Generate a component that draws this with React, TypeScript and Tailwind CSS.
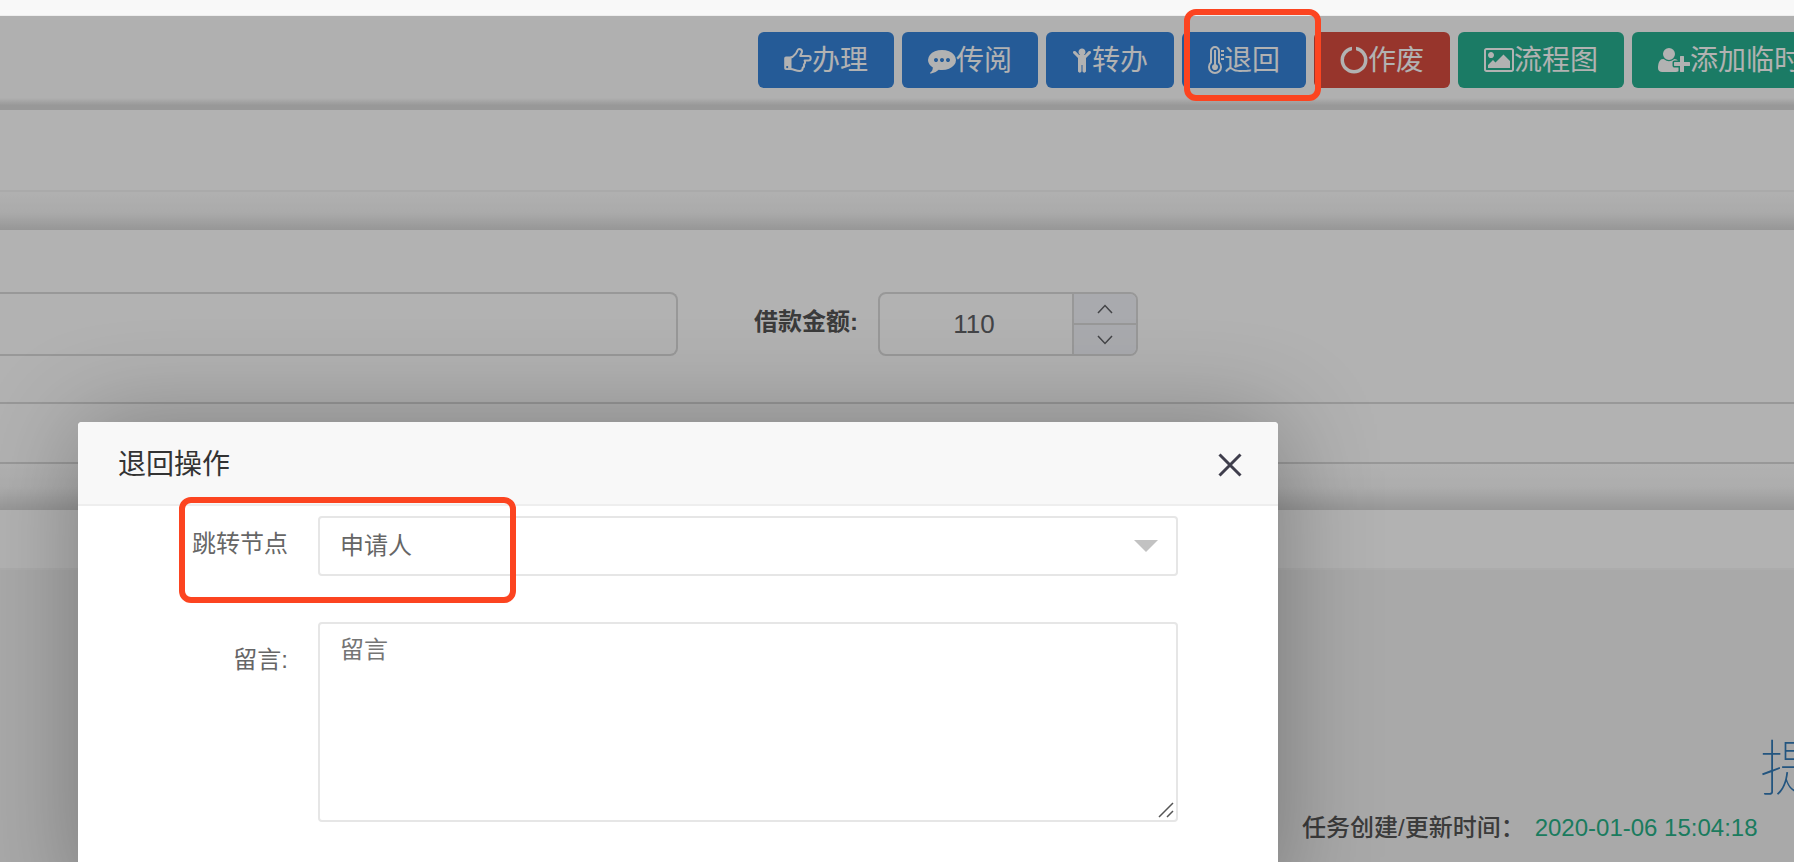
import type { ReactNode } from "react";

type IconProps = { viewBox: string; className: string; children: ReactNode };

function Icon({ viewBox, className, children }: IconProps) {
  return (
    <svg viewBox={viewBox} className={className} fill="currentColor" aria-hidden="true">
      {children}
    </svg>
  );
}

const HandIcon = () => (
  <Icon viewBox="0 0 28 28" className="h-7 w-7 shrink-0">
    <path
      fillRule="evenodd"
      d="M2 10.5h5.5v13.500h-5.500a1.800 1.800 0 0 1-1.800-1.800v-9.900a1.800 1.800 0 0 1 1.800-1.800zM3.200 20a1.100 1.100 0 1 0 0 2.200 1.100 1.100 0 0 0 0-2.200z"
    />
    <path
      fill="none"
      stroke="currentColor"
      strokeWidth="2"
      strokeLinejoin="round"
      d="M6.500 11.500C9.500 11.300 10.500 9 12 7.300C13.600 5.500 13.200 3 15 3C17 3 18 4 18 5.600C18 7.600 16.200 8.800 16.200 10H24.500A2.200 2.200 0 0 1 24.500 14.400H20.600C21.600 16 21 17.800 19.900 18.300C20.400 20 19.800 21.400 18.600 22C18.800 24 17.600 25 15.600 25C11.600 25 10 23 6.500 23"
    />
  </Icon>
);

const CommentIcon = () => (
  <Icon viewBox="0 0 1792 1792" className="h-7 w-7 shrink-0">
    <path d="M640 896q0-53-37.5-90.5t-90.5-37.5-90.5 37.5-37.5 90.5 37.5 90.5 90.5 37.5 90.5-37.5 37.5-90.5zm384 0q0-53-37.5-90.5t-90.5-37.5-90.5 37.5-37.5 90.5 37.5 90.5 90.5 37.5 90.5-37.5 37.5-90.5zm384 0q0-53-37.5-90.5t-90.5-37.5-90.5 37.5-37.5 90.5 37.5 90.5 90.5 37.5 90.5-37.5 37.5-90.5zm384 0q0 174-120 321.5t-326 233-450 85.5q-110 0-211-18-173 173-435 229-52 10-86 13-12 1-22-6t-13-18q-4-15 20-37 5-5 23.5-21.5t25.5-23.5 23.5-25.5 24-31.5 20.5-37 20-48 14.500-57.500 12.500-72.500q-146-90-229.500-216.500t-83.500-269.500q0-174 120-321.500t326-233 450-85.500 450 85.500 326 233 120 321.500z" />
  </Icon>
);

const ChildIcon = () => (
  <Icon viewBox="0 0 1280 1792" className="h-7 w-5 shrink-0">
    <path d="M1188 476l-292 292v824q0 46-33 79t-79 33-79-33-33-79v-384h-64v384q0 46-33 79t-79 33-79-33-33-79v-824l-292-292q-28-28-28-68t28-68q29-28 68.5-28t67.5 28l228 228h368l228-228q28-28 68-28t68 28q28 29 28 68.5t-28 67.5zm-324-92q0 93-65.5 158.5t-158.5 65.5-158.5-65.5-65.5-158.500 65.500-158.500 158.500-65.500 158.500 65.500 65.500 158.500z" />
  </Icon>
);

const ThermometerIcon = () => (
  <Icon viewBox="0 0 1024 1792" className="h-7 w-4 shrink-0">
    <path d="M640 1344q0 80-56 136t-136 56-136-56-56-136q0-60 35-110t93-71v-907h128v907q58 21 93 71t35 110zm128 0q0-77-34-144t-94-112v-768q0-80-56-136t-136-56-136 56-56 136v768q-60 45-94 112t-34 144q0 133 93.5 226.5t226.5 93.5 226.5-93.5 93.5-226.5zm128 0q0 185-131.5 316.5t-316.5 131.5-316.5-131.5-131.5-316.5q0-182 128-313v-711q0-133 93.5-226.5t226.5-93.5 226.500 93.500 93.500 226.500v711q128 131 128 313zm128-576v128h-192v-128h192zm0-256v128h-192v-128h192zm0-256v128h-192v-128h192z" />
  </Icon>
);

const NotchIcon = () => (
  <Icon viewBox="0 0 1792 1792" className="h-7 w-7 shrink-0">
    <path d="M1760 896q0 176-68.5 336t-184 275.5-275.5 184-336 68.5-336-68.5-275.5-184-184-275.5-68.5-336q0-213 97-398.5t265-305.5 374-151v228q-221 45-366.5 221t-145.5 406q0 130 51 248.5t136.5 204 204 136.5 248.5 51 248.5-51 204-136.500 136.500-204 51-248.500q0-230-145.500-406t-366.500-221v-228q206 31 374 151t265 305.500 97 398.500z" />
  </Icon>
);

const PictureIcon = () => (
  <Icon viewBox="-64 0 1920 1792" className="h-7 w-[30px] shrink-0">
    <path d="M576 576q0 80-56 136t-136 56-136-56-56-136 56-136 136-56 136 56 56 136zm1024 384v448h-1408v-192l320-320 160 160 512-512zm96-704h-1600q-13 0-22.5 9.5t-9.5 22.5v1216q0 13 9.5 22.5t22.5 9.5h1600q13 0 22.5-9.5t9.5-22.5v-1216q0-13-9.5-22.5t-22.5-9.5zm160 32v1216q0 66-47 113t-113 47h-1600q-66 0-113-47t-47-113v-1216q0-66 47-113t113-47h1600q66 0 113 47t47 113z" />
  </Icon>
);

const UserPlusIcon = () => (
  <Icon viewBox="0 0 2048 1792" className="h-7 w-8 shrink-0">
    <path d="M704 896q-159 0-271.5-112.5t-112.5-271.5 112.5-271.5 271.5-112.5 271.5 112.5 112.5 271.5-112.5 271.5-271.5 112.5zm960 128h352q13 0 22.5 9.5t9.5 22.5v192q0 13-9.5 22.5t-22.5 9.5h-352v352q0 13-9.5 22.5t-22.5 9.5h-192q-13 0-22.5-9.5t-9.5-22.5v-352h-352q-13 0-22.5-9.5t-9.5-22.5v-192q0-13 9.5-22.5t22.5-9.5h352v-352q0-13 9.5-22.5t22.5-9.5h192q13 0 22.5 9.5t9.5 22.5v352zm-736 224q0 52 38 90t90 38h256v238q-68 50-171 50h-874q-121 0-194-69t-73-190q0-53 3.5-103.5t14-109 26.5-108.5 43-97.5 62-81 85.5-53.5 111.5-20q19 0 39 17 79 61 154.5 91.5t164.5 30.5 164.5-30.5 154.5-91.5q20-17 39-17 132 0 217 96h-223q-52 0-90 38t-38 90v192z" />
  </Icon>
);

const actions = [
  { label: "办理", icon: <HandIcon />, color: "bg-[#3683d9]" },
  { label: "传阅", icon: <CommentIcon />, color: "bg-[#3683d9]" },
  { label: "转办", icon: <ChildIcon />, color: "bg-[#3683d9]" },
  { label: "退回", icon: <ThermometerIcon />, color: "bg-[#3683d9]", marked: true },
  { label: "作废", icon: <NotchIcon />, color: "bg-[#d94c3f]" },
  { label: "流程图", icon: <PictureIcon />, color: "bg-[#28b191]" },
  { label: "添加临时", icon: <UserPlusIcon />, color: "bg-[#28b191]" },
];

function Toolbar() {
  return (
    <header className="bg-[#fcfcfc]">
      <div className="ml-[758px] flex gap-2 pt-4 pb-2.5">
        {actions.map((a) => (
          <div key={a.label} className="relative shrink-0">
            <button
              type="button"
              className={`flex h-14 items-center rounded-md px-[26px] text-[28px] leading-7 whitespace-nowrap text-white ${a.color}`}
            >
              {a.icon}
              <span className="pt-0.5">{a.label}</span>
            </button>
            {a.marked && (
              <span className="pointer-events-none absolute -top-[23px] left-0.5 z-30 h-[92px] w-[137px] rounded-xl border-6 border-[#fc4420]" />
            )}
          </div>
        ))}
      </div>
      <div className="h-3 bg-linear-to-b from-[#fcfcfc] to-[#dadada] to-60%" />
    </header>
  );
}

function LoanForm() {
  return (
    <section className="bg-white">
      <div className="flex h-[172px] items-start pt-[62px]">
        <input
          aria-label="借款事由"
          className="h-16 w-[678px] shrink-0 rounded-r-lg border-2 border-l-0 border-[#dadada] bg-white px-5 text-2xl"
        />
        <label htmlFor="amount" className="ml-[76px] shrink-0 pt-3 text-2xl leading-9 font-bold text-[#555]">
          借款金额:
        </label>
        <div className="ml-5 flex h-16 w-[260px] shrink-0 overflow-hidden rounded-lg border-2 border-[#dadada]">
          <input
            id="amount"
            defaultValue="110"
            className="min-w-0 flex-1 pr-1 text-center text-[26px] text-[#606266]"
          />
          <div className="flex w-16 flex-col border-l-2 border-[#dadada] bg-[#f3f4fa] text-[#606266]">
            <button type="button" aria-label="增加" className="flex flex-1 items-center justify-center border-b-2 border-[#dadada]">
              <svg viewBox="0 0 16 10" className="h-2.5 w-4" fill="none" stroke="currentColor" strokeWidth="1.5">
                <path d="M1 9 8 1.500 15 9" />
              </svg>
            </button>
            <button type="button" aria-label="减少" className="flex flex-1 items-center justify-center">
              <svg viewBox="0 0 16 10" className="h-2.5 w-4" fill="none" stroke="currentColor" strokeWidth="1.5">
                <path d="M1 1 8 8.500 15 1" />
              </svg>
            </button>
          </div>
        </div>
      </div>
      <div className="h-[62px] border-y-2 border-[#dadada]" />
      <div className="h-[46px] bg-linear-to-b from-white via-[#f8f8f8] via-50% to-[#d8d8d8]" />
    </section>
  );
}

function TaskHistory() {
  return (
    <section className="flex-1 bg-white">
      <div className="h-[60px] border-b-2 border-[#f6f6f6]" />
      <div className="flex flex-col bg-[#f3f3f3] pb-12">
        <a href="#submit" className="ml-[1760px] pt-[160px] text-[60px] leading-20 font-thin whitespace-nowrap text-[#337ab7]">
          提交
        </a>
        <p className="ml-[1302px] text-2xl leading-9 whitespace-nowrap text-[#555]">
          <span className="font-medium">任务创建/更新时间：</span>
          <time className="ml-2.5 text-[#28b187]">2020-01-06 15:04:18</time>
        </p>
      </div>
    </section>
  );
}

function ReturnDialog() {
  return (
    <div
      role="dialog"
      aria-labelledby="dialog-title"
      className="absolute top-[422px] left-[78px] z-20 w-[1200px] rounded-sm bg-white pb-20 shadow-[2px_2px_100px_rgba(0,0,0,0.3)]"
    >
      <div className="flex h-[84px] items-center justify-between rounded-t-sm border-b-2 border-[#eee] bg-[#f8f8f8] pr-9 pl-10">
        <h2 id="dialog-title" className="pt-1 text-[28px] leading-10 text-[#333]">
          退回操作
        </h2>
        <button type="button" aria-label="关闭" className="pt-1 text-[#3f3e4c]">
          <svg viewBox="0 0 24 24" className="size-6" fill="none" stroke="currentColor" strokeWidth="3">
            <path d="M1.500 1.500 22.500 22.500M22.500 1.500 1.500 22.500" />
          </svg>
        </button>
      </div>
      <form className="flex flex-col gap-[46px] pt-2.5 pr-[100px] text-2xl text-[#666]">
        <div className="relative flex">
          <label htmlFor="node" className="w-[210px] pt-2.5 text-right leading-9">
            跳转节点
          </label>
          <div className="relative ml-[30px] flex-1">
            <select
              id="node"
              className="h-[60px] w-full appearance-none rounded-sm border-2 border-[#e6e6e6] bg-white px-5"
            >
              <option>申请人</option>
            </select>
            <svg viewBox="0 0 24 12" className="pointer-events-none absolute top-6 right-5 h-3 w-6 fill-[#c2c2c2]">
              <path d="M0 0h24L12 12z" />
            </svg>
          </div>
          <span className="pointer-events-none absolute -top-[19px] left-[101px] h-[106px] w-[337px] rounded-xl border-6 border-[#fc4420]" />
        </div>
        <div className="flex">
          <label htmlFor="message" className="w-[210px] pt-5 text-right leading-9">
            留言:
          </label>
          <div className="relative ml-[30px] flex-1">
            <textarea
              id="message"
              placeholder="留言"
              className="block h-[200px] w-full resize-none rounded-sm border-2 border-[#e6e6e6] px-5 py-2 leading-9 placeholder:text-[#757575]"
            />
            <svg viewBox="0 0 16 16" className="pointer-events-none absolute right-1 bottom-1 size-4" fill="none" stroke="#555" strokeWidth="1.5">
              <path d="M1 15 15 1M9 15l6-6" />
            </svg>
          </div>
        </div>
      </form>
    </div>
  );
}

export default function App() {
  return (
    <div className="relative h-screen overflow-hidden bg-[#f8f8f8] font-['Liberation_Sans','Noto_Sans_CJK_SC',sans-serif]">
      <div className="h-4 border-b border-[#eee]" />
      <main className="flex min-h-full flex-col">
        <Toolbar />
        <section>
          <div className="h-[82px] border-b-2 border-[#f4f4f4] bg-white" />
          <div className="h-[38px] bg-linear-to-b from-[#fdfdfd] via-[#f4f4f4] via-55% to-[#d8d8d8]" />
        </section>
        <LoanForm />
        <TaskHistory />
      </main>
      <div className="absolute inset-x-0 top-4 bottom-0 z-10 bg-black/30" />
      <ReturnDialog />
    </div>
  );
}
